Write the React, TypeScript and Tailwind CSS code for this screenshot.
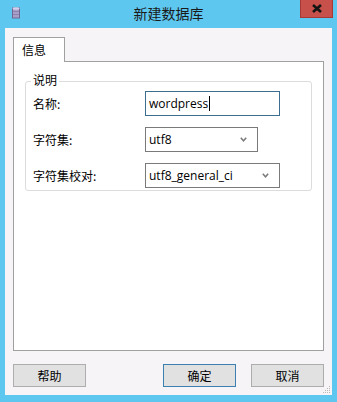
import React from 'react';

const cjk = { fontFamily: '"Noto Sans CJK SC", "Microsoft YaHei", sans-serif' };
const latin = { fontFamily: '"Open Sans", "Noto Sans CJK SC", sans-serif' };

const Chevron = () => (
  <svg width="7" height="5" viewBox="0 0 7 5" className="shrink-0">
    <path d="M0.8 0.8 L3.5 3.8 L6.2 0.8" fill="none" stroke="#7a7a7a" strokeWidth="1.5" />
  </svg>
);

const Select = ({ value, width }: { value: string; width: string }) => (
  <div className={`${width} h-[25px] border border-[#7a7a7a] bg-white flex items-center justify-between pl-[3px] pr-[10px]`}>
    <span className="text-[12px] text-black" style={latin}>{value}</span>
    <Chevron />
  </div>
);

const Button = ({ label, primary }: { label: string; primary?: boolean }) => (
  <button
    className={`w-[73px] h-[23px] bg-[#e1e1e1] border text-[12px] text-black flex items-center justify-center ${
      primary ? 'border-[#3c7fb1]' : 'border-[#adadad]'
    }`}
    style={cjk}
  >
    {label}
  </button>
);

export default function App() {
  return (
    <div className="w-[337px] h-[402px] bg-[#5ec7ef] flex flex-col overflow-hidden">
      {/* Title bar */}
      <div className="relative h-[28px] flex items-center justify-center">
        <svg width="8" height="12" viewBox="0 0 8 12" className="absolute left-[12px] top-[7px]">
          <rect x="0.5" y="1" width="7" height="10" fill="#a9a0c8" stroke="#6e6696" strokeWidth="1" />
          <ellipse cx="4" cy="1.5" rx="3.5" ry="1.2" fill="#d6d0ec" />
          <line x1="1" y1="4.5" x2="7" y2="4.5" stroke="#8a82b2" />
          <line x1="1" y1="7.5" x2="7" y2="7.5" stroke="#8a82b2" />
        </svg>
        <span className="text-[14px] text-[#1a1a1a] -mt-[2px]" style={cjk}>新建数据库</span>
        <div className="absolute top-0 right-[4px] w-[33px] h-[18px] bg-[#c7504a] border border-[#a33a35] border-t-0 flex items-center justify-center">
          <svg width="12" height="9" viewBox="0 0 12 9">
            <path d="M2 1 L10 8 M10 1 L2 8" stroke="#141414" strokeWidth="2.6" />
          </svg>
        </div>
      </div>

      {/* Client area */}
      <div className="relative mx-[5px] mb-[7px] flex-1 bg-[#f6f4f6] flex flex-col px-[8px] pt-[9px]">
        {/* Tab */}
        <div className="flex">
          <div className="w-[52px] h-[25px] bg-white border border-b-0 border-[#a0a0a0] -mb-px z-10 flex items-center pl-[8px]">
            <span className="text-[12px] text-black" style={cjk}>信息</span>
          </div>
        </div>
        {/* Panel */}
        <div className="h-[290px] bg-white border border-[#a0a0a0] px-[11px] pt-[19px]">
          <div className="relative h-[110px] border border-[#dcdcdc] rounded-[3px] pt-[9px] pl-[7px]">
            <span className="absolute -top-[10px] left-[5px] bg-white px-[2px] text-[12px] text-black leading-[16px]" style={cjk}>
              说明
            </span>
            <div className="flex items-center h-[25px]">
              <span className="w-[112px] text-[12px] text-black" style={cjk}>名称:</span>
              <div className="w-[135px] h-[25px] border border-[#3b6e8f] bg-white flex items-center pl-[3px]">
                <span className="text-[12px] text-black" style={latin}>wordpress</span>
                <span className="w-px h-[15px] bg-black ml-[1px]" />
              </div>
            </div>
            <div className="flex items-center h-[25px] mt-[11px]">
              <span className="w-[112px] text-[12px] text-black" style={cjk}>字符集:</span>
              <Select value="utf8" width="w-[113px]" />
            </div>
            <div className="flex items-center h-[25px] mt-[11px]">
              <span className="w-[112px] text-[12px] text-black" style={cjk}>字符集校对:</span>
              <Select value="utf8_general_ci" width="w-[135px]" />
            </div>
          </div>
        </div>
        {/* Buttons */}
        <div className="flex mt-[13px]">
          <Button label="帮助" />
          <div className="flex-1" />
          <Button label="确定" primary />
          <div className="w-[15px]" />
          <Button label="取消" />
        </div>
        {/* Resize grip */}
        <svg width="8" height="8" viewBox="0 0 8 8" className="absolute right-[1px] bottom-[1px]">
          {[
            [6, 0],
            [4, 2],
            [6, 2],
            [2, 4],
            [4, 4],
            [6, 4],
            [0, 6],
            [2, 6],
            [4, 6],
            [6, 6],
          ].map(([x, y], i) => (
            <rect key={i} x={x} y={y} width="1" height="1" fill="#b8b8b8" />
          ))}
        </svg>
      </div>
    </div>
  );
}
